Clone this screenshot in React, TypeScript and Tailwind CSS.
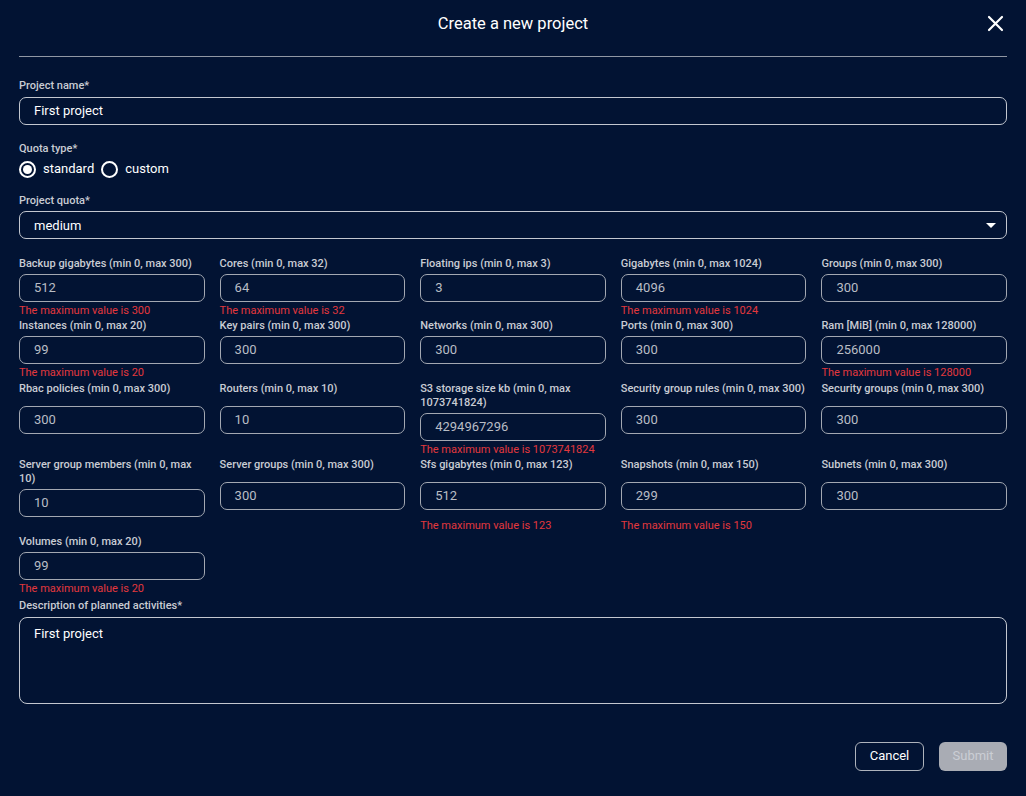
import React from "react";

type Field = { label: string; value: string; error?: string };

const fields: Field[] = [
  { label: "Backup gigabytes (min 0, max 300)", value: "512", error: "The maximum value is 300" },
  { label: "Cores (min 0, max 32)", value: "64", error: "The maximum value is 32" },
  { label: "Floating ips (min 0, max 3)", value: "3" },
  { label: "Gigabytes (min 0, max 1024)", value: "4096", error: "The maximum value is 1024" },
  { label: "Groups (min 0, max 300)", value: "300" },
  { label: "Instances (min 0, max 20)", value: "99", error: "The maximum value is 20" },
  { label: "Key pairs (min 0, max 300)", value: "300" },
  { label: "Networks (min 0, max 300)", value: "300" },
  { label: "Ports (min 0, max 300)", value: "300" },
  { label: "Ram [MiB] (min 0, max 128000)", value: "256000", error: "The maximum value is 128000" },
  { label: "Rbac policies (min 0, max 300)", value: "300" },
  { label: "Routers (min 0, max 10)", value: "10" },
  { label: "S3 storage size kb (min 0, max 1073741824)", value: "4294967296", error: "The maximum value is 1073741824" },
  { label: "Security group rules (min 0, max 300)", value: "300" },
  { label: "Security groups (min 0, max 300)", value: "300" },
  { label: "Server group members (min 0, max 10)", value: "10" },
  { label: "Server groups (min 0, max 300)", value: "300" },
  { label: "Sfs gigabytes (min 0, max 123)", value: "512", error: "The maximum value is 123" },
  { label: "Snapshots (min 0, max 150)", value: "299", error: "The maximum value is 150" },
  { label: "Subnets (min 0, max 300)", value: "300" },
  { label: "Volumes (min 0, max 20)", value: "99", error: "The maximum value is 20" },
];

function QuotaField({ f }: { f: Field }) {
  return (
    <div className="flex flex-col">
      <div className="grow pb-[3px] text-[11px] leading-[14px] font-medium text-[#c9ccd3]">{f.label}</div>
      <div className="grow">
        <div className="h-[28px] rounded-[7px] border border-[#a3a8b2] flex items-center pl-[14px] text-[13px] text-[#b9bdc5]">
          {f.value}
        </div>
      </div>
      <div className="h-[16px] pt-[2px] text-[11px] leading-[14px] text-[#e3383d] whitespace-nowrap">{f.error ?? ""}</div>
    </div>
  );
}

function Label({ children, className = "" }: { children: React.ReactNode; className?: string }) {
  return <div className={`text-[11px] leading-[14px] font-medium text-[#c9ccd3] ${className}`}>{children}</div>;
}

export default function App() {
  return (
    <div
      className="min-h-[796px] w-full bg-[#021333] text-white"
      style={{ fontFamily: "Roboto, 'Noto Sans', 'Liberation Sans', sans-serif" }}
    >
      <div className="grid grid-cols-[1fr_auto_1fr] items-center pt-[12px] pb-[21px]">
        <div />
        <div className="text-[16.5px] leading-[23px] text-white">Create a new project</div>
        <div className="flex justify-end pr-[22px]">
          <svg width="17" height="17" viewBox="0 0 17 17" fill="none">
            <path d="M2 2 L15 15 M15 2 L2 15" stroke="white" strokeWidth="2.2" strokeLinecap="round" />
          </svg>
        </div>
      </div>
      <div className="mx-[19px] h-px bg-[#9097a4]" />

      <div className="px-[19px]">
        <Label className="mt-[21.5px] mb-[4px]">Project name*</Label>
        <div className="h-[28px] rounded-[7px] border border-[#c3c7cf] flex items-center pl-[14px] text-[13px] text-white">
          First project
        </div>

        <Label className="mt-[17px]">Quota type*</Label>
        <div className="mt-[4.5px] h-[18px] flex items-center gap-[7px] text-[13px]">
          <div className="w-[17px] h-[17px] rounded-full border-2 border-white flex items-center justify-center">
            <div className="w-[9px] h-[9px] rounded-full bg-white" />
          </div>
          <span>standard</span>
          <div className="w-[17px] h-[17px] rounded-full border-2 border-white" />
          <span>custom</span>
        </div>

        <Label className="mt-[15.5px] mb-[3.5px]">Project quota*</Label>
        <div className="h-[28px] rounded-[7px] border border-[#c3c7cf] flex items-center justify-between pl-[14px] pr-[10px] text-[13px] text-white">
          <span className="pt-px">medium</span>
          <svg width="10" height="5" viewBox="0 0 10 5">
            <path d="M0 0 L10 0 L5 5 Z" fill="white" />
          </svg>
        </div>

        <div className="mt-[17.5px] grid grid-cols-5 gap-x-[15px] gap-y-[1.5px]">
          {fields.map((f) => (
            <QuotaField key={f.label} f={f} />
          ))}
        </div>

        <Label className="mt-[3px] mb-[4.5px]">Description of planned activities*</Label>
        <div className="h-[87px] rounded-[8px] border border-[#c3c7cf] pl-[14px] pt-[8px] text-[13px] leading-[16px] text-white">
          First project
        </div>

        <div className="mt-[37.5px] flex justify-end gap-[15px]">
          <button className="w-[69px] h-[29px] rounded-[6px] border border-[#aeb3bc] text-[13px] text-white">
            Cancel
          </button>
          <button className="w-[68px] h-[29px] rounded-[6px] bg-[#a9acb4] text-[13px] text-[#cbced4]">
            Submit
          </button>
        </div>
      </div>
    </div>
  );
}
